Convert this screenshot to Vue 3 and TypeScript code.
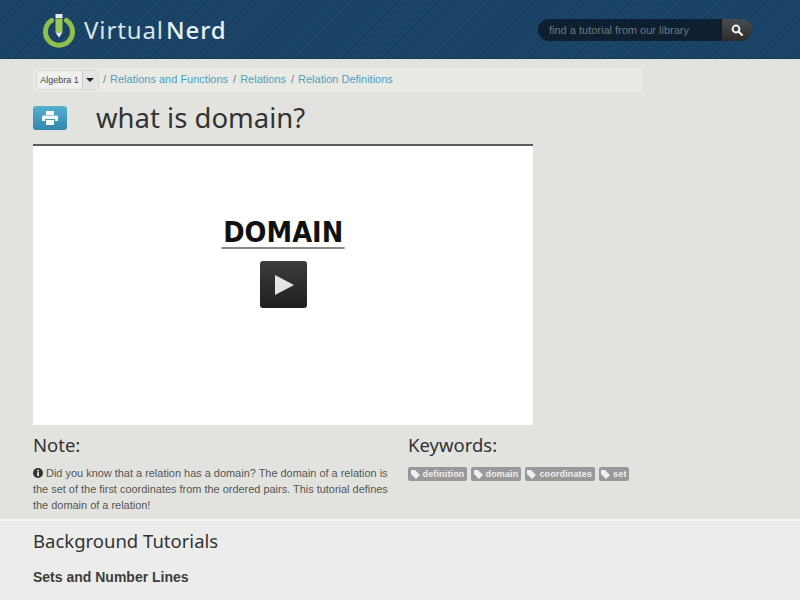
<script setup lang="ts">
const crumbs: string[] = ['Relations and Functions', 'Relations', 'Relation Definitions']
const keywords: string[] = ['definition', 'domain', 'coordinates', 'set']
</script>

<template>
  <div class="page">
    <header class="top">
      <div class="logo">
        <svg width="36" height="40" viewBox="0 0 36 40">
          <path d="M10.5 10.5 A13.5 13.5 0 1 0 25.5 10.5" fill="none" stroke="#8fc04f" stroke-width="5" stroke-linecap="round" />
          <rect x="14.5" y="4" width="7" height="4" fill="#e8ecec" />
          <rect x="14.5" y="8.5" width="7" height="14" fill="#9cc75c" />
          <path d="M14.5 22.5 h7 l-3.5 5 z" fill="#e8ecec" />
        </svg>
        <span class="brand">Virtual<b>Nerd</b></span>
      </div>
      <div class="search">
        <span class="search-input">find a tutorial from our library</span>
        <span class="search-btn">
          <svg width="12" height="12" viewBox="0 0 12 12">
            <circle cx="5" cy="5" r="3.4" fill="none" stroke="#f2f2f2" stroke-width="2" />
            <path d="M7.5 7.5 L11 11" stroke="#f2f2f2" stroke-width="2.2" stroke-linecap="round" />
          </svg>
        </span>
      </div>
    </header>

    <main class="main">
      <nav class="crumbs">
        <span class="select"><span class="select-label">Algebra 1</span><span class="select-arrow"></span></span>
        <template v-for="c in crumbs" :key="c">
          <span class="sep">/</span><a class="crumb">{{ c }}</a>
        </template>
      </nav>

      <div class="title-row">
        <span class="print">
          <svg width="16" height="14" viewBox="0 0 16 14">
            <path d="M4 0 h8 v4 h-8 z M1.5 4.5 h13 a1.5 1.5 0 0 1 1.5 1.5 v4 h-3 v-2 h-10 v2 h-3 v-4 a1.5 1.5 0 0 1 1.5 -1.5 z M4 9 h8 v5 h-8 z" fill="#f4fafc" />
          </svg>
        </span>
        <h1 class="title">what is domain?</h1>
      </div>

      <div class="video">
        <div class="video-word">DOMAIN</div>
        <div class="play"><span class="play-tri"></span></div>
      </div>

      <div class="info">
        <section class="note">
          <h2 class="heading">Note:</h2>
          <p class="note-text">
            <svg class="info-icon" width="10" height="10" viewBox="0 0 10 10">
              <circle cx="5" cy="5" r="5" fill="#333" />
              <rect x="4.1" y="4.2" width="1.9" height="3.9" fill="#e2e3de" />
              <rect x="4.1" y="1.9" width="1.9" height="1.5" fill="#e2e3de" />
            </svg>
            Did you know that a relation has a domain? The domain of a relation is the set of the first coordinates from the ordered pairs. This tutorial defines the domain of a relation!
          </p>
        </section>
        <section class="keywords">
          <h2 class="heading">Keywords:</h2>
          <div class="tags">
            <span v-for="k in keywords" :key="k" class="tag">
              <svg width="9" height="9" viewBox="0 0 9 9"><path d="M0 0 h4 l5 5 -4 4 -5 -5 z" fill="#f0f0f0" /></svg>
              {{ k }}
            </span>
          </div>
        </section>
      </div>
    </main>

    <section class="background">
      <h2 class="heading bg-heading">Background Tutorials</h2>
      <h3 class="sub">Sets and Number Lines</h3>
    </section>
  </div>
</template>

<style>
html, body { margin: 0; overflow: hidden; background: #e2e3de; }
</style>

<style scoped>
.page {
  width: 800px;
  height: 600px;
  overflow: hidden;
  background: #e2e3de;
  font-family: "Liberation Sans", Arial, sans-serif;
}
.top {
  height: 59px;
  box-sizing: border-box;
  display: flex;
  align-items: center;
  justify-content: space-between;
  padding: 0 48px 0 41px;
  background: repeating-linear-gradient(135deg, #1c466b 0 2px, #17405f 2px 4px);
  border-bottom: 1px solid #173a4c;
}
.logo { display: flex; align-items: center; gap: 7px; margin-top: 2px; }
.brand {
  font-family: "Noto Sans", sans-serif;
  font-size: 24px;
  letter-spacing: 0.9px;
  color: #d9e6ea;
  margin-top: -2px;
}
.brand b { font-weight: 500; color: #e8f0f2; margin-left: 2px; }
.search { display: flex; height: 22px; margin-top: 2px; }
.search-input {
  width: 173px;
  padding-left: 11px;
  background: #0d1f30;
  border-radius: 11px 0 0 11px;
  color: #6e7a82;
  font-size: 11px;
  line-height: 22px;
}
.search-btn {
  width: 30px;
  display: flex;
  align-items: center;
  justify-content: center;
  background: linear-gradient(#4a4d50, #2c2a2a);
  border-radius: 0 11px 11px 0;
}
.main { padding: 9px 0 0 33px; height: 460px; box-sizing: border-box; }
.crumbs {
  width: 609px;
  height: 24px;
  box-sizing: border-box;
  display: flex;
  align-items: center;
  padding: 0 0 2px 4px;
  background: #e9eae4;
  font-size: 11px;
}
.select {
  display: flex;
  height: 18px;
  margin-top: 2px;
  border-radius: 3px;
  background: #f0f0ee;
  box-shadow: 0 0 0 1px #d5d5d2;
}
.select-label {
  width: 45px;
  text-align: center;
  font-size: 9px;
  line-height: 18px;
  color: #444;
}
.select-arrow {
  width: 15px;
  position: relative;
  background: #e4e4e2;
  border-left: 1px solid #ccc;
}
.select-arrow::after {
  content: "";
  position: absolute;
  left: 3px;
  top: 7px;
  border: 4px solid transparent;
  border-top-color: #222;
}
.sep { margin: 0 4px 0 5px; color: #777; }
.crumb { color: #4a9fc2; }
.title-row { display: flex; align-items: center; height: 52px; }
.print {
  width: 34px;
  height: 24px;
  display: flex;
  align-items: center;
  justify-content: center;
  border-radius: 3px;
  background: linear-gradient(#56afcf, #3486ab);
  margin: -1px 29px 0 0;
}
.title {
  margin: 0;
  font-family: "Noto Sans", sans-serif;
  font-weight: 400;
  font-size: 27.5px;
  line-height: 36px;
  color: #333;
}
.video {
  width: 500px;
  height: 281px;
  box-sizing: border-box;
  background: #fff;
  border-top: 2px solid #5c5c5c;
  display: flex;
  flex-direction: column;
  align-items: center;
}
.video-word {
  margin-top: 73px;
  font-family: "DejaVu Sans", sans-serif;
  font-weight: 700;
  font-size: 28px;
  line-height: 28px;
  color: #111;
  border-bottom: 2px solid #888;
  transform: scaleX(0.92);
  padding: 0 2px;
}
.play {
  margin-top: 12px;
  width: 47px;
  height: 47px;
  border-radius: 3px;
  background: linear-gradient(#3c3c3c, #1f1f1f);
  display: flex;
  align-items: center;
  justify-content: center;
}
.play-tri {
  margin-left: 3px;
  border-style: solid;
  border-width: 10px 0 10px 19px;
  border-color: transparent transparent transparent #e4e4e4;
}
.info { display: flex; gap: 17px; width: 609px; padding-top: 7px; }
.note { width: 358px; }
.heading {
  margin: 0;
  font-family: "Noto Sans", sans-serif;
  font-weight: 400;
  font-size: 18.5px;
  line-height: 26px;
  color: #333;
}
.note-text {
  margin: 7px 0 0;
  font-size: 10.95px;
  line-height: 16px;
  color: #555;
}
.info-icon { vertical-align: -1px; }
.tags { display: flex; gap: 4px; margin-top: 9px; }
.tag {
  height: 14px;
  display: flex;
  align-items: center;
  gap: 3px;
  padding: 0 2.5px;
  border-radius: 2px;
  background: #999;
  color: #f0f0f0;
  font-size: 9px;
  font-weight: 700;
  letter-spacing: 0.15px;
}
.background {
  height: 81px;
  box-sizing: border-box;
  padding: 7px 33px 0;
  background: #ecedea;
  border-top: 2px solid #f6f6f4;
}
.sub {
  margin: 14px 0 0;
  font-size: 14px;
  line-height: 18px;
  font-weight: 700;
  color: #3c3c3c;
}
</style>
